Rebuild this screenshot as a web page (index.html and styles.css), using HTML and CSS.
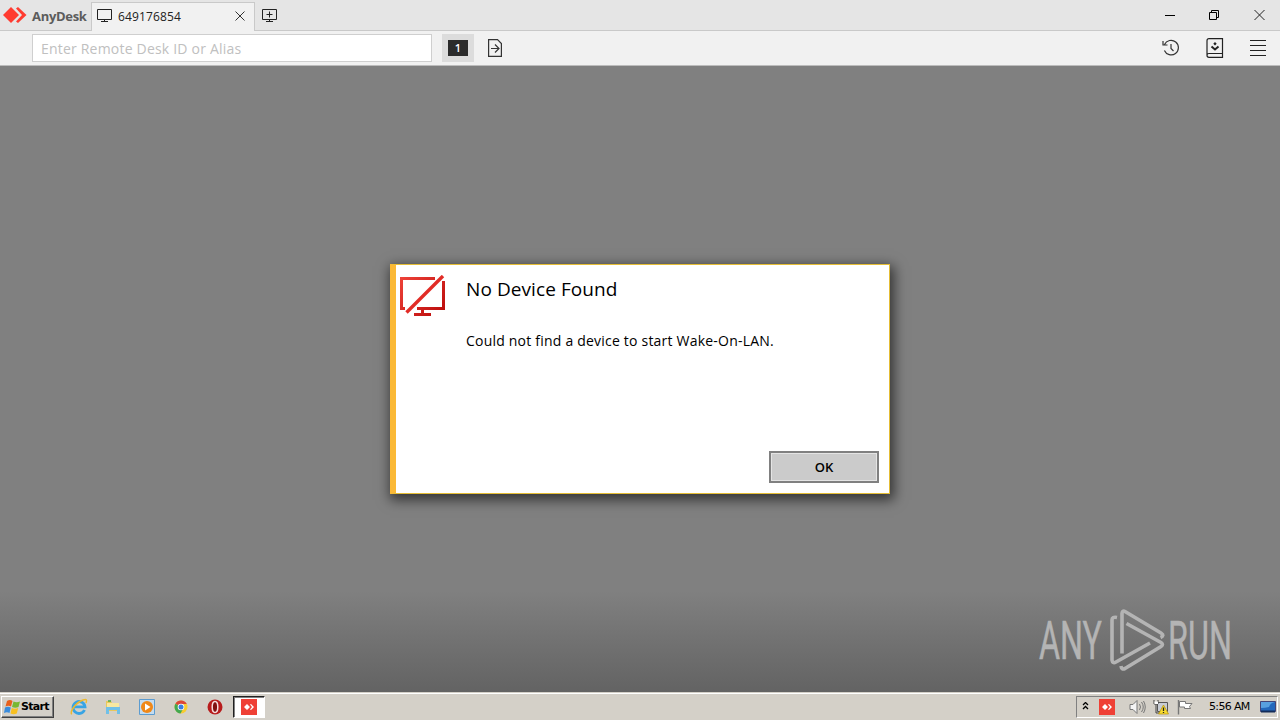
FILE: index.html
```html
<!DOCTYPE html>
<html lang="en">
<head>
    <meta charset="UTF-8">
    <title>AnyDesk</title>
    <link rel="stylesheet" href="styles.css">
</head>
<body>

    <!-- Title bar -->
    <header class="titlebar">
        <div class="brand">
            <svg class="brand-logo" width="24" height="16" viewBox="0 0 24 16">
                <path d="M8 0L16 8L8 16L0 8Z" fill="#ff3b30"/>
                <path d="M13 1.500L15 0L23.500 8L15 16L13 14.500L19 8Z" fill="#ff3b30"/>
            </svg>
            <span class="brand-name">AnyDesk</span>
        </div>
        <div class="tab">
            <svg width="16" height="14" viewBox="0 0 16 14" fill="none" stroke="#222">
                <path d="M.5 .5H14.500V10.500H.5ZM7.500 10.500V12M4 12.500H11"/>
            </svg>
            <span class="tab-id">649176854</span>
            <svg class="tab-close" width="10" height="10" viewBox="0 0 10 10" fill="none" stroke="#333">
                <path d="M.5 .5L9.500 9.500M9.500 .5L.5 9.500"/>
            </svg>
        </div>
        <svg class="new-tab" width="16" height="14" viewBox="0 0 16 14" fill="none" stroke="#222">
            <path d="M.5 .5H14.500V10.500H.5ZM7.500 2.500V8.500M4.500 5.500H10.500M7.500 10.500V12M4 12.500H11"/>
        </svg>
        <div class="window-buttons">
            <svg width="10" height="11" viewBox="0 0 10 11"><path d="M0 5.500H10" stroke="#000"/></svg>
            <svg width="11" height="11" viewBox="0 0 11 11" fill="none" stroke="#000">
                <path d="M.5 2.500H7.500V9.500H.5ZM2.500 2V.5H9.500V7.500H8"/>
            </svg>
            <svg width="11" height="11" viewBox="0 0 11 11" fill="none" stroke="#222"><path d="M.5 0L10.500 10M10.500 0L.5 10"/></svg>
        </div>
    </header>

    <!-- Address bar -->
    <nav class="toolbar">
        <input class="address" type="text" placeholder="Enter Remote Desk ID or Alias">
        <div class="monitor"><span class="monitor-number">1</span></div>
        <svg class="transfer" width="15" height="18" viewBox="0 0 15 18" fill="none" stroke="#333" stroke-width="1.200">
            <path d="M.6 .6H9.500L13.400 4.500V17.400H.6ZM3 9.500H11M7 5.500L11 9.500L7 13.500"/>
        </svg>
        <div class="tools">
            <svg width="18" height="18" viewBox="0 0 18 18" fill="none" stroke="#333" stroke-width="1.200">
                <path d="M2.500 5.500A7.300 7.300 0 1 1 2.400 11.500M1 2V6H5.500M9 5V9.500L11.500 12"/>
            </svg>
            <svg width="18" height="20" viewBox="0 0 18 20" fill="none" stroke="#222" stroke-width="1.200">
                <path d="M16.500 .7H3Q1 .7 1 2.700V17.300Q1 19.300 3 19.300H16.500ZM16.500 15.500H3Q1 15.500 1 17.300"/>
                <path d="M5.500 8.500L9 11.500L12.500 8.500" stroke-width="2"/>
                <path d="M9 4L10.700 5.700L9 7.400L7.300 5.700Z" fill="#222" stroke="none"/>
            </svg>
            <svg width="16" height="16" viewBox="0 0 16 16" stroke="#222"><path d="M0 .5H16M0 5.500H16M0 10.500H16M0 15.500H16"/></svg>
        </div>
    </nav>

    <!-- Remote screen -->
    <main class="screen">
        <section class="dialog">
            <svg class="dialog-icon" width="46" height="42" viewBox="0 0 46 42" fill="none" stroke-width="3">
                <defs>
                    <linearGradient id="red" gradientUnits="userSpaceOnUse" x1="0" y1="0" x2="46" y2="42">
                        <stop offset="0" stop-color="#f0443a"/>
                        <stop offset="1" stop-color="#b80808"/>
                    </linearGradient>
                </defs>
                <g stroke="url(#red)">
                    <path d="M35 3.500H1.500V33.500H5M43.500 6V33.500H17"/>
                    <path d="M22.500 34V39M14 39.500H31"/>
                    <path d="M6.500 37.500L43 1" stroke="#e22c26" stroke-width="3.400"/>
                </g>
            </svg>
            <div class="dialog-body">
                <h1 class="dialog-title">No Device Found</h1>
                <p class="dialog-text">Could not find a device to start Wake-On-LAN.</p>
                <button class="ok">OK</button>
            </div>
        </section>

        <svg class="watermark" width="210" height="68" viewBox="0 0 210 68">
            <g class="watermark-text">
                <text x="4" y="53" textLength="63" lengthAdjust="spacingAndGlyphs">ANY</text>
                <text x="133" y="53" textLength="64" lengthAdjust="spacingAndGlyphs">RUN</text>
            </g>
            <g fill="none" stroke="#b4b4b4" stroke-width="3.600" stroke-linejoin="round">
                <path d="M87 47.500V7.500Q87.500 4 90 5.500L126 27Q130 29.500 125.500 31.500"/>
                <path d="M82 11.500Q77 10.500 77 14V54Q77.500 58 81 56L115 37"/>
                <path d="M91.500 17.500L126 36.500Q129 38.500 126 40.500L90 62.500Q86.500 64 86 60"/>
            </g>
        </svg>
    </main>

    <!-- Taskbar -->
    <footer class="taskbar">
        <div class="start">
            <svg width="17" height="16" viewBox="0 0 17 16">
                <path d="M3 2Q6 0 8.500 2L7 7.500Q4.500 6 1.500 7.500Z" fill="#e8601c"/>
                <path d="M9.500 2.500Q12.500 4 16 2.500L14.500 8Q11.500 9.500 8 8Z" fill="#78b832"/>
                <path d="M1 8.500Q4 7 6.800 8.500L5.500 14Q3 12.500 0 14Z" fill="#3a8cdc"/>
                <path d="M7.800 9Q11 10.500 14.200 9L12.800 14.500Q9.500 16 6.500 14.500Z" fill="#f8c020"/>
            </svg>
            <span>Start</span>
        </div>
        <div class="quick">
            <svg width="18" height="18" viewBox="0 0 18 18" fill="none">
                <path d="M14.500 12A6 6 0 1 1 15 8.800H4" stroke="#38a4e4" stroke-width="2.800"/>
                <path d="M2 16C-1 15 5 5 13 2Q18 0 16 5" stroke="#edb92e" stroke-width="1.500"/>
            </svg>
            <svg width="18" height="18" viewBox="0 0 18 18">
                <path d="M2 3H7L8 5H15V13H2Z" fill="#e8c85c"/>
                <path d="M3 5H15V12H3Z" fill="#f8e8a0"/>
                <path d="M2 9H16V16H13V12H5V16H2Z" fill="#70c0e8"/>
                <path d="M4 3H7" stroke="#48a848" stroke-width="1.500"/>
            </svg>
            <svg width="18" height="18" viewBox="0 0 18 18">
                <path d="M1.500 1.500H16.500V16.500H1.500Z" fill="#c4dcf0" stroke="#5c9cd0"/>
                <circle cx="9" cy="9" r="6" fill="#f08818"/>
                <path d="M7 5.500L12.500 9L7 12.500Z" fill="#fff"/>
            </svg>
            <svg width="18" height="18" viewBox="0 0 18 18">
                <circle cx="9" cy="9" r="6.500" fill="#f8cc30"/>
                <path d="M9 9L3.400 5.700A6.500 6.500 0 0 1 14.800 6H9Z" fill="#dc4638"/>
                <path d="M3.400 5.700A6.500 6.500 0 0 0 8.500 15.500L11 11L9 9Z" fill="#42a850"/>
                <circle cx="9" cy="9" r="3.300" fill="#fff"/>
                <circle cx="9" cy="9" r="2.500" fill="#3a7ee0"/>
            </svg>
            <svg width="18" height="18" viewBox="0 0 18 18">
                <circle cx="9" cy="9" r="7.500" fill="#b81c1c"/>
                <ellipse cx="9" cy="9" rx="2.800" ry="5.500" fill="#801010" stroke="#f4dcdc" stroke-width="1.500"/>
            </svg>
        </div>
        <div class="task-active">
            <svg width="16" height="16" viewBox="0 0 16 16">
                <path d="M0 0H16V16H0Z" fill="#ef4035"/>
                <path d="M6 5L9 8L6 11L3 8ZM9 5.500L10 5L13 8L10 11L9 10.500L11 8Z" fill="#fff"/>
            </svg>
        </div>
        <div class="tray">
            <svg class="chevrons" width="7" height="9" viewBox="0 0 7 9" fill="none" stroke="#000" stroke-width="1.300"><path d="M1 3L3.500 .5L6 3M1 7L3.500 4.500L6 7"/></svg>
            <svg class="tray-desk" width="16" height="16" viewBox="0 0 16 16">
                <path d="M0 0H16V16H0Z" fill="#ef4035"/>
                <path d="M6 5L9 8L6 11L3 8ZM9 5.500L10 5L13 8L10 11L9 10.500L11 8Z" fill="#fff"/>
            </svg>
            <svg class="volume" width="17" height="16" viewBox="0 0 17 16" fill="none" stroke="#777">
                <path d="M1 5.500H4L8 1.500V14.500L4 10.500H1Z" fill="#f4f4f4"/>
                <path d="M10.500 5Q12.500 8 10.500 11M12.500 3Q16 8 12.500 13M14.500 2Q18 8 14.500 14"/>
            </svg>
            <svg class="network" width="16" height="16" viewBox="0 0 16 16">
                <path d="M4.500 3.500H14.500V12.500H4.500Z" fill="#c8ccd4" stroke="#555"/>
                <path d="M1 1V5H5V1M3 5V14H7" fill="none" stroke="#444"/>
                <path d="M1.500 2.500H5V5H1.500Z" fill="#fff"/>
                <path d="M10.500 6L15.500 15H5.500Z" fill="#f8dc30" stroke="#b89000" stroke-width=".7"/>
                <path d="M10.500 8.500V12M10.500 13V14" stroke="#222" stroke-width="1.300"/>
            </svg>
            <svg class="flag" width="16" height="16" viewBox="0 0 16 16" stroke="#777">
                <path d="M1.500 1V15.500" fill="none" stroke-width="1.400"/>
                <path d="M2.500 2.500H8.500V4.500H15L12.500 7.500L13.500 9.500H7.500V8H2.500Z" fill="#fff"/>
            </svg>
            <span class="clock">5:56 AM</span>
            <svg class="show-desktop" width="16" height="14" viewBox="0 0 16 14">
                <path d="M.5 1.500H15.500V11.500H.5Z" fill="#2468bc" stroke="#447"/>
                <path d="M1 2H15Q10 3 9 7Q5 8 1 8Z" fill="#58a0e0"/>
                <path d="M1 11.500H15" stroke="#142c58" stroke-width="2"/>
            </svg>
        </div>
    </footer>

</body>
</html>
```

FILE: styles.css
```css
* {
    box-sizing: border-box;
}
body {
    margin: 0;
    width: 1280px;
    height: 720px;
    display: flex;
    flex-direction: column;
    overflow: hidden;
    font-family: "Open Sans", "Noto Sans", sans-serif;
}
svg {
    display: block;
    flex: none;
}

/* title bar */
.titlebar {
    height: 31px;
    display: flex;
    background: #e5e5e5;
    border-bottom: 1px solid #c9c9c9;
}
.brand {
    width: 91px;
    display: flex;
    padding: 7px 0 0 3px;
}
.brand-name {
    margin-left: 5px;
    font-size: 13px;
    line-height: 18px;
    font-weight: 700;
    color: #5c5c5c;
    letter-spacing: -0.3px;
}
.tab {
    width: 164px;
    height: 29px;
    margin-top: 2px;
    padding: 0 9px 2px 5px;
    display: flex;
    align-items: center;
    background: #f1f1f1;
    border: 1px solid #c9c9c9;
    border-bottom: none;
}
.tab-id {
    margin-left: 5px;
    font-size: 12px;
    letter-spacing: 0.15px;
    color: #222;
}
.tab-close {
    margin-left: auto;
}
.new-tab {
    margin: 9px 0 0 7px;
}
.window-buttons {
    display: flex;
    gap: 34px;
    margin-left: auto;
    padding: 10px 16px 0 0;
    margin-right: -1px;
}

/* toolbar */
.toolbar {
    height: 35px;
    display: flex;
    align-items: center;
    padding: 0 14px 0 32px;
    background: #f1f1f1;
    border-bottom: 1px solid #bcbcbc;
}
.address {
    width: 400px;
    height: 28px;
    padding: 0 8px;
    background: #fff;
    border: 1px solid #cfcfcf;
    font-family: inherit;
    font-size: 14px;
    letter-spacing: 0.2px;
}
.address::placeholder {
    color: #c0c0c0;
}
.monitor {
    width: 32px;
    height: 28px;
    margin-left: 10px;
    display: flex;
    align-items: center;
    justify-content: center;
    background: #dcdcdc;
}
.monitor-number {
    width: 20px;
    height: 16px;
    background: #2b2b2b;
    color: #fff;
    font-size: 11px;
    font-weight: 600;
    line-height: 16px;
    text-align: center;
}
.transfer {
    margin-left: 14px;
}
.tools {
    display: flex;
    align-items: center;
    gap: 26px;
    margin-left: auto;
}

/* remote screen */
.screen {
    position: relative;
    height: 626px;
    display: flex;
    justify-content: center;
    align-items: flex-start;
    padding-top: 198px;
    background: linear-gradient(#808080 0, #808080 525px, #636363 626px);
}
.dialog {
    width: 500px;
    height: 230px;
    display: flex;
    background: #fff;
    border: 1px solid #e5bd35;
    border-left: 6px solid #fbb936;
    box-shadow: 2px 4px 12px 2px rgba(0, 0, 0, 0.6);
}
.dialog-icon {
    margin: 10px 0 0 4px;
}
.dialog-body {
    flex: 1;
    display: flex;
    flex-direction: column;
    padding: 10px 10px 10px 20px;
}
.dialog-title {
    margin: 0;
    font-size: 19px;
    line-height: 28px;
    font-weight: 400;
    letter-spacing: 0.08px;
}
.dialog-text {
    margin: 28px 0 0;
    font-size: 14px;
    line-height: 20px;
    letter-spacing: 0.21px;
}
.ok {
    width: 110px;
    height: 32px;
    margin: auto 0 0 auto;
    padding: 0;
    background: #cbcbcb;
    border: 2px solid #808080;
    box-shadow: inset 0 0 0 1px #e4e4e4;
    font-family: inherit;
    font-size: 13px;
    font-weight: 600;
    color: #000;
}
.watermark {
    position: absolute;
    right: 35px;
    bottom: 18px;
}
.watermark-text {
    font-family: Roboto, sans-serif;
    font-size: 53px;
    fill: #b4b4b4;
    stroke: #b4b4b4;
    stroke-width: 0.5px;
}

/* taskbar */
.taskbar {
    height: 28px;
    display: flex;
    align-items: center;
    padding: 0 2px 0 1px;
    background: #d4d0c8;
    border-top: 1px solid #d4d0c8;
    box-shadow: inset 0 1px #fff;
}
.start {
    width: 53px;
    height: 22px;
    display: flex;
    align-items: center;
    padding-left: 2px;
    border: 1px solid;
    border-color: #fff #404040 #404040 #fff;
    box-shadow: inset -1px -1px #808080;
    font-family: "DejaVu Sans", sans-serif;
    font-size: 11px;
    font-weight: 700;
    letter-spacing: -0.7px;
}
.quick {
    display: flex;
    gap: 16px;
    margin-left: 16px;
}
.task-active {
    width: 32px;
    height: 22px;
    display: flex;
    align-items: center;
    justify-content: center;
    margin-left: 9px;
    background: #fff;
    border: 1px solid;
    border-color: #202020 #fff #fff #202020;
    box-shadow: inset 1px 1px #808080;
}
.tray {
    width: 202px;
    height: 22px;
    display: flex;
    align-items: center;
    margin-left: auto;
    padding-left: 5px;
    border: 1px solid;
    border-color: #808080 #fff #fff #808080;
}
.tray-desk {
    margin-left: 10px;
}
.volume {
    margin-left: 14px;
}
.network {
    margin-left: 7px;
}
.flag {
    margin-left: 8px;
}
.clock {
    width: 43px;
    margin-left: 16px;
    font-family: "DejaVu Sans", sans-serif;
    font-size: 11px;
    letter-spacing: -0.65px;
    white-space: nowrap;
}
.show-desktop {
    margin-left: 8px;
}
```
